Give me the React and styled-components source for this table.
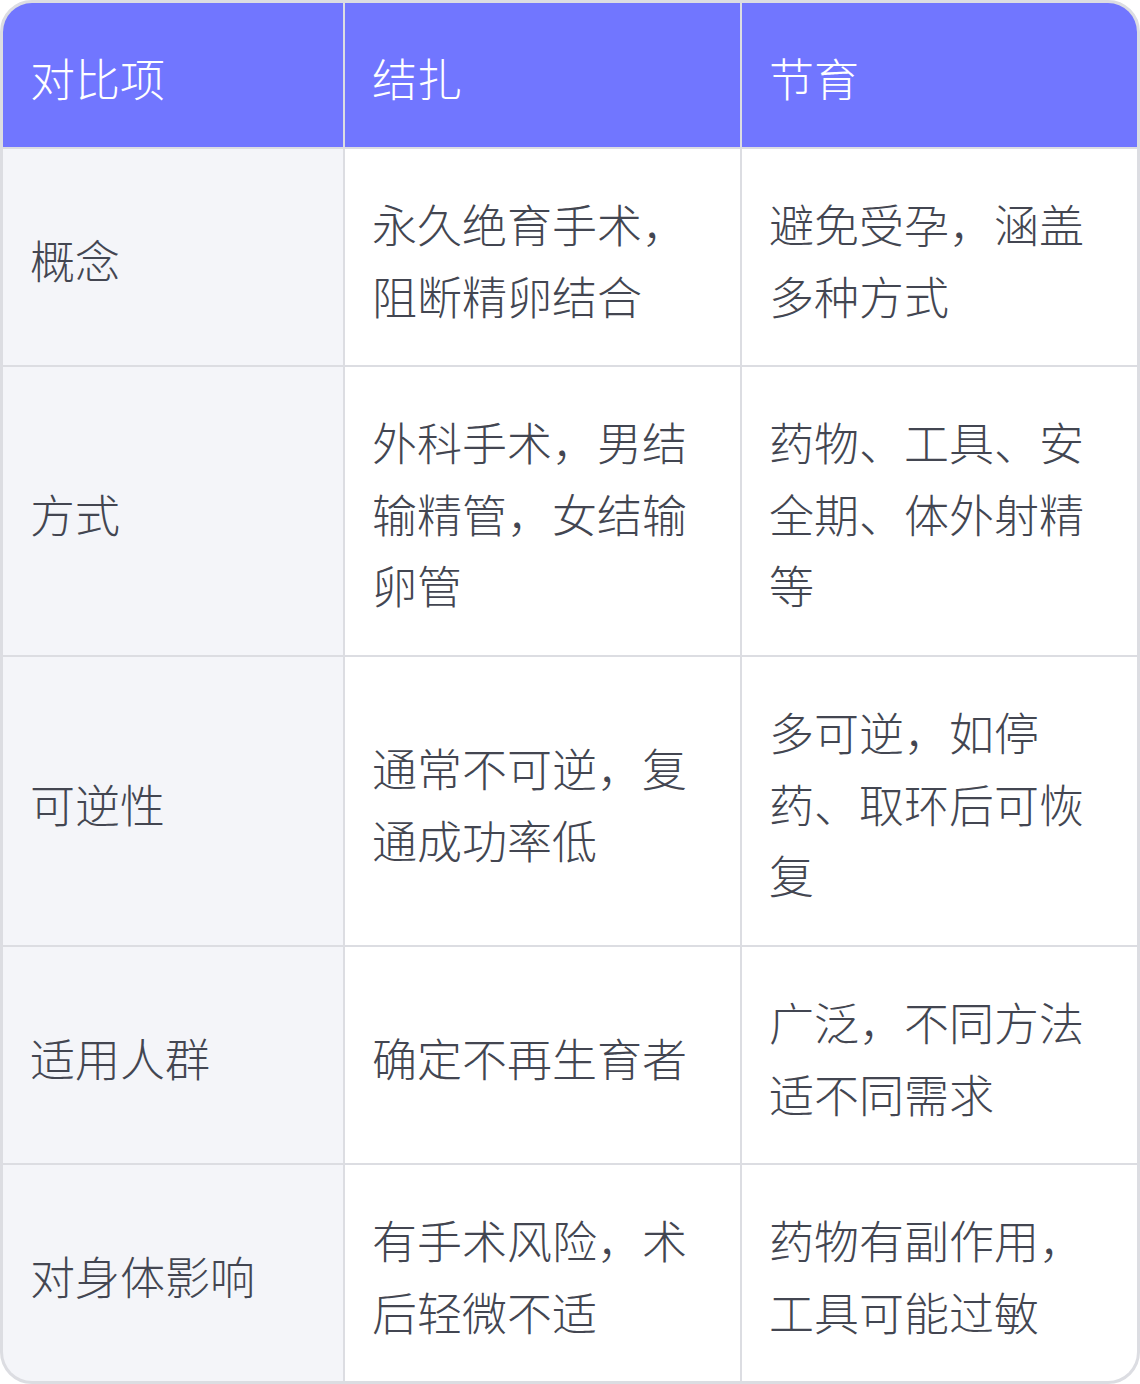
import React from "react";
import styled, { createGlobalStyle } from "styled-components";

const GlobalStyle = createGlobalStyle`
  html, body {
    margin: 0;
    padding: 0;
    background: #ffffff;
  }
  body {
    font-family: "Noto Sans CJK SC", "Noto Sans", sans-serif;
  }
`;

const TableWrap = styled.div`
  width: 1140px;
  height: 1384px;
  box-sizing: border-box;
  border: 3px solid #dcdde2;
  border-radius: 32px;
  overflow: hidden;
  background-color: #dcdde2;
`;

const Grid = styled.div`
  display: grid;
  grid-template-columns: 340px 395px 395px;
  grid-template-rows: 144px 216px 288px 288px 216px 216px;
  gap: 2px;
  height: 100%;
`;

const HeadCell = styled.div`
  display: flex;
  align-items: center;
  padding: 5px 27px 0;
  background-color: #7176ff;
  color: #ffffff;
  font-size: 45px;
  font-weight: 300;
  line-height: 71.5px;
`;

const Cell = styled.div`
  display: flex;
  align-items: center;
  padding: 5px 27px 0;
  background-color: ${props => (props.label ? "#f4f5f9" : "#ffffff")};
  color: #434651;
  font-size: 45px;
  font-weight: 300;
  line-height: 71.5px;
  word-break: break-all;
`;

const headers = ["对比项", "结扎", "节育"];

const rows = [
  { name: "概念", ligation: "永久绝育手术，阻断精卵结合", birth: "避免受孕，涵盖多种方式" },
  { name: "方式", ligation: "外科手术，男结输精管，女结输卵管", birth: "药物、工具、安全期、体外射精等" },
  { name: "可逆性", ligation: "通常不可逆，复通成功率低", birth: "多可逆，如停药、取环后可恢复" },
  { name: "适用人群", ligation: "确定不再生育者", birth: "广泛，不同方法适不同需求" },
  { name: "对身体影响", ligation: "有手术风险，术后轻微不适", birth: "药物有副作用，工具可能过敏" }
];

export default function App() {
  return (
    <>
      <GlobalStyle />
      <TableWrap>
        <Grid>
          {headers.map(h => (
            <HeadCell key={h}>{h}</HeadCell>
          ))}
          {rows.map(row => (
            <React.Fragment key={row.name}>
              <Cell label>{row.name}</Cell>
              <Cell>{row.ligation}</Cell>
              <Cell>{row.birth}</Cell>
            </React.Fragment>
          ))}
        </Grid>
      </TableWrap>
    </>
  );
}
